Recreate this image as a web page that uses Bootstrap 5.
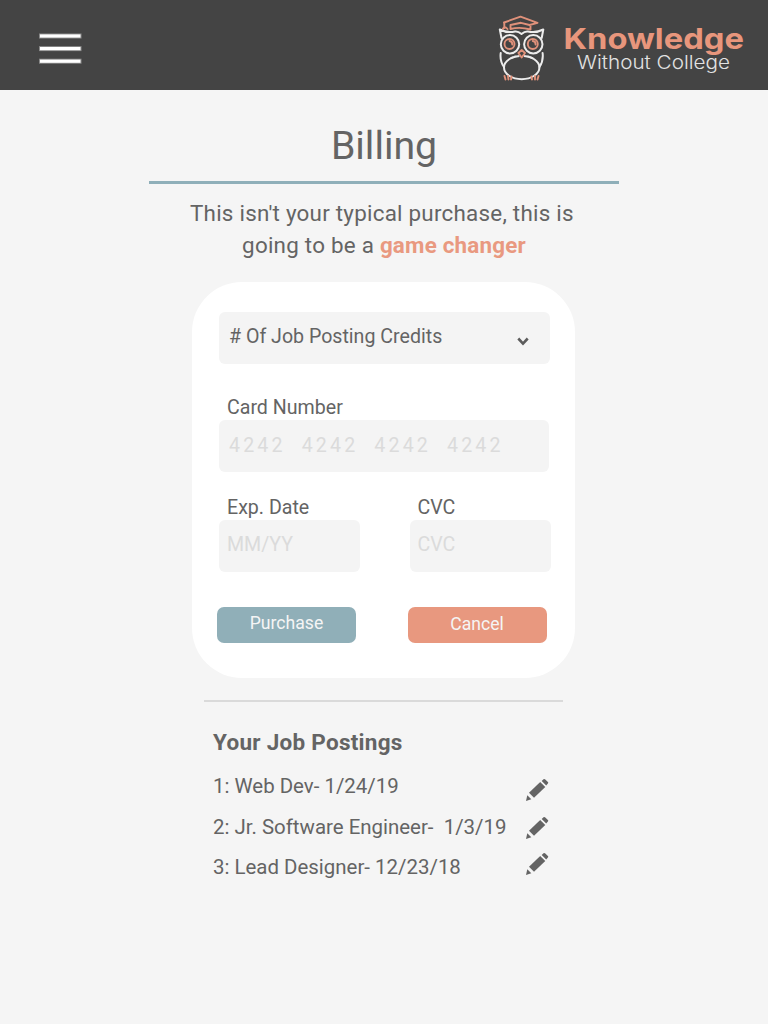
<!DOCTYPE html>
<html lang="en">
<head>
<meta charset="utf-8">
<meta name="viewport" content="width=device-width, initial-scale=1">
<title>Billing - Knowledge Without College</title>
<link href="https://cdn.jsdelivr.net/npm/bootstrap@5.3.0/dist/css/bootstrap.min.css" rel="stylesheet">
<script src="https://cdn.jsdelivr.net/npm/bootstrap@5.3.0/dist/js/bootstrap.bundle.min.js"></script>
<style>
  body { background: #f5f5f5; color: #646464; font-family: Roboto, "Liberation Sans", sans-serif; overflow-x: hidden; }
  .topbar { height: 90px; background: #444; padding: 0 20px 0 36px; }
  .menu-icon { margin-top: 6px; }
  .page-title { margin: 32px 0 0; font-size: 39.2px; line-height: 49px; font-weight: 400; }
  .title-rule { width: 470px; height: 3px; background: #8fafb9; margin-top: 10px; }
  .tagline { width: 388px; margin: 13px 0 0; font-size: 22.4px; line-height: 32px; letter-spacing: .24px; }
  .tagline span { margin-right: 6px; }
  .tagline strong { color: #e99980; letter-spacing: .2px; }
  .pay-card { width: 383px; height: 396px; margin: 21px 1px 0 0; border: 0; border-radius: 50px; padding: 30px 23px 0 27px; background: #fff; }
  .field { height: 52px; border: 0; border-radius: 6px; background: #f4f4f4; color: #646464; font-size: 19.6px; line-height: 50px; padding: 0 9px; box-shadow: none; }
  .field::placeholder { color: #dbdbdb; opacity: 1; }
  .field-label { font-size: 19.6px; line-height: 24px; margin: 0; padding-left: 8px; display: block; }
  .credits { width: 331px; padding: 0 21px 0 10px; }
  .chevron { margin-top: 25px; }
  .number-label { margin-top: 32px; }
  .card-no { width: 330px; padding: 0 10px 1px; letter-spacing: 3.15px; }
  .short-fields { margin-top: 23.5px; gap: 49.5px; }
  .half { width: 141px; padding: 0 8px 3px; }
  .actions { margin: 35px 0 0 -2px; gap: 51.5px; }
  .action { height: 36.5px; width: 139px; border: 0; border-radius: 7px; font-size: 17.6px; line-height: 33px; color: #f5f5f5 !important; padding: 0 0 3px; }
  .buy { background: #90afb8 !important; }
  .drop { background: #e8987f !important; padding-bottom: 1px; }
  .split-rule { width: 359px; height: 2.5px; background: #dadada; margin: 21.5px 1px 0 0; }
  .postings { width: 342px; margin: 23.5px 0 0; }
  .postings h2 { font-size: 22.5px; font-weight: 700; line-height: 32px; letter-spacing: .27px; margin: 0 0 13px; }
  .postings li { height: 40.5px; font-size: 20.45px; line-height: 30px; white-space: pre; }
  .postings li:nth-child(2) { padding-top: .6px; }
  .edit-icons { width: 30px; padding-top: 7.5px; }
</style>
</head>
<body>
<header class="topbar d-flex align-items-center justify-content-between">
  <button class="btn p-0 border-0 lh-1" type="button" aria-label="Menu">
    <svg width="48" height="36" viewBox="0 0 48 36" class="d-block menu-icon">
      <g fill="#8a8a8a"><rect x="3" y="3.500" width="42.500" height="5"/><rect x="3" y="16.100" width="42.500" height="5"/><rect x="3" y="28.700" width="42.500" height="5"/></g>
      <g fill="#fff"><rect x="4" y="4.400" width="40.500" height="3.200"/><rect x="4" y="17" width="40.500" height="3.200"/><rect x="4" y="29.600" width="40.500" height="3.200"/></g>
    </svg>
  </button>
  <a href="#" class="d-block" aria-label="Knowledge Without College">
    <svg width="258" height="90" viewBox="490 0 258 90" class="d-block">
      <g fill="none" stroke="#ececec" stroke-width="2" stroke-linecap="round" stroke-linejoin="round">
        <path d="M501.500 38L499.800 29.500Q507 33.300 515 31.500Q518 31 521.500 34Q525 31 528 31.500Q536 33.300 543.300 29.500L541.700 38"/>
        <circle cx="510" cy="44.200" r="9.200"/>
        <circle cx="533.300" cy="44.200" r="9.200"/>
        <path d="M500.700 53Q499.700 61 504 67M542.600 53Q543.600 61 539.500 67"/>
        <ellipse cx="521.700" cy="67.500" rx="17.700" ry="11.700"/>
      </g>
      <path d="M513 56.500L521.700 53L530.500 56.500L521.700 60Z" fill="#444"/>
      <path d="M510.500 58.500Q515 56 519.500 55.900M524 55.900Q529 56 533 58.500" fill="none" stroke="#ececec" stroke-width="2"/>
      <g fill="none" stroke="#e0917a" stroke-width="1.900" stroke-linecap="round" stroke-linejoin="round">
        <path d="M504 22.500L520.500 16.700L537.500 22.800L529.500 25L521 22.800L510.500 25L510.500 29Q520 26.500 530.500 29.500V25"/>
        <path d="M504.300 23V28M502.800 29Q504.500 25.500 507.500 29"/>
        <circle cx="509.500" cy="44" r="5"/><path d="M509.500 41Q512.500 41.300 512.300 44.500"/>
        <circle cx="532.800" cy="44" r="5"/><path d="M532.800 41Q535.800 41.300 535.600 44.500"/>
        <path d="M521.700 50L525 53L521.700 57.500L518.400 53Z"/>
        <path d="M504.500 76L505.500 79.500M508 76L508.500 79.500M511.500 76.500L511 79.500M531.500 76.500L532 79.500M535 76L535 79.500M538.500 76L537.500 79.500"/>
      </g>
      <text x="563.500" y="48.500" font-family="Inter, sans-serif" font-weight="700" font-size="29" fill="#e8967c" textLength="180.500" lengthAdjust="spacingAndGlyphs">Knowledge</text>
      <text x="577" y="69" font-family="Inter, sans-serif" font-weight="300" font-size="18.500" fill="#e2e2e2" textLength="153" lengthAdjust="spacingAndGlyphs">Without College</text>
    </svg>
  </a>
</header>

<main class="d-flex flex-column align-items-center">
  <h1 class="page-title">Billing</h1>
  <div class="title-rule"></div>
  <p class="tagline text-center text-nowrap"><span>This isn't your typical purchase, this is</span><br>going to be a <strong>game changer</strong></p>

  <form class="card pay-card" onsubmit="return false">
    <div class="field credits d-flex justify-content-between">
      <div># Of Job Posting Credits</div>
      <svg width="12" height="9" viewBox="0 0 12 9" class="flex-shrink-0 chevron"><path d="M1.300 1.500L6 6.600L10.700 1.500" fill="none" stroke="#5c5c5c" stroke-width="2.600"/></svg>
    </div>

    <label class="field-label number-label" for="number">Card Number</label>
    <input class="form-control field card-no" id="number" placeholder="4242  4242  4242  4242">

    <div class="d-flex short-fields">
      <div>
        <label class="field-label" for="expiry">Exp. Date</label>
        <input class="form-control field half" id="expiry" placeholder="MM/YY">
      </div>
      <div>
        <label class="field-label" for="cvc">CVC</label>
        <input class="form-control field half" id="cvc" placeholder="CVC">
      </div>
    </div>

    <div class="d-flex actions">
      <button class="btn action buy" type="submit">Purchase</button>
      <button class="btn action drop" type="button">Cancel</button>
    </div>
  </form>

  <div class="split-rule"></div>

  <section class="postings">
    <h2>Your Job Postings</h2>
    <div class="d-flex justify-content-between">
      <ul class="list-unstyled m-0">
        <li>1: Web Dev- 1/24/19</li>
        <li>2: Jr. Software Engineer-  1/3/19</li>
        <li>3: Lead Designer- 12/23/18</li>
      </ul>
      <div class="d-flex flex-column edit-icons">
        <svg width="24" height="24" viewBox="0 0 24 24" style="margin-bottom:14px"><use href="#pencil"/></svg>
        <svg width="24" height="24" viewBox="0 0 24 24" style="margin-bottom:12px"><use href="#pencil"/></svg>
        <svg width="24" height="24" viewBox="0 0 24 24"><use href="#pencil"/></svg>
      </div>
    </div>
  </section>
</main>

<svg width="0" height="0" class="position-absolute">
  <symbol id="pencil" viewBox="0 0 24 24">
    <g fill="#646464">
      <path d="M15.200 3.900L20.300 9L9 19.700L4 14.700Z"/>
      <path d="M16.700 3L18.500 1.300Q19.400 .5 20.300 1.400L22.900 4Q23.700 4.800 22.900 5.600L21.200 7.600Z"/>
      <path d="M2.300 17.300L6.300 21.200L1 22.900Z"/>
    </g>
  </symbol>
</svg>
</body>
</html>
